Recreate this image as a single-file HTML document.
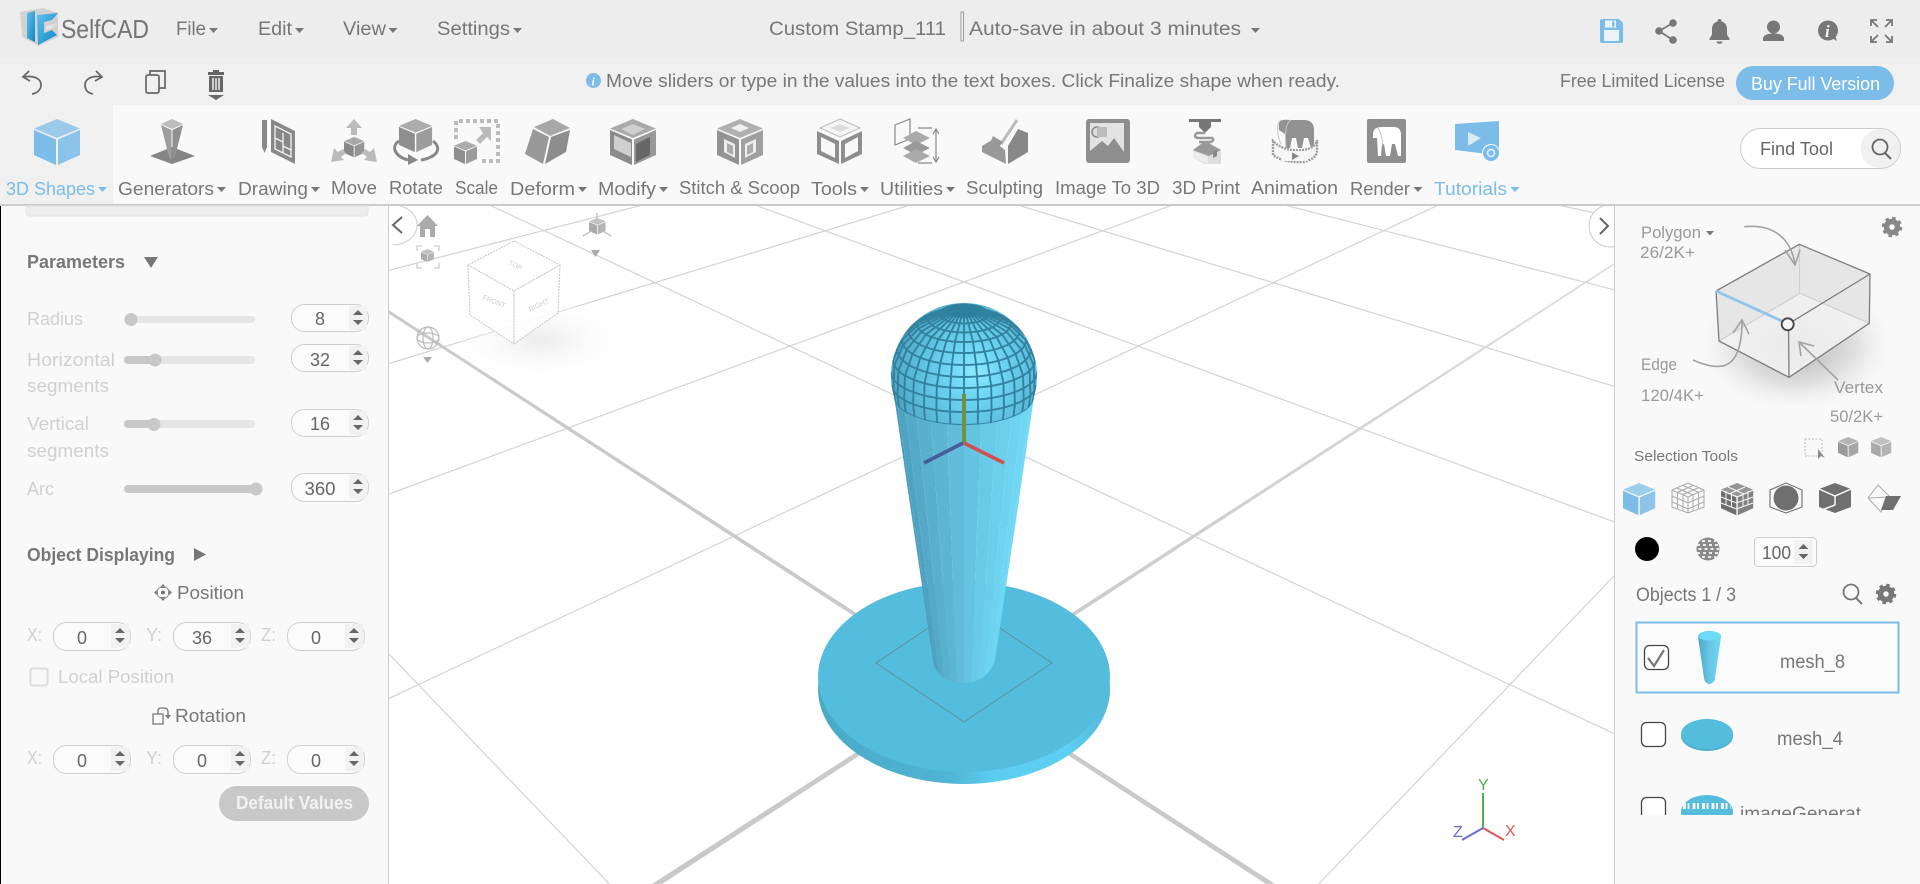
<!DOCTYPE html>
<html lang="en"><head><meta charset="utf-8"><title>SelfCAD</title>
<style>
html,body{margin:0;padding:0;width:1920px;height:884px;overflow:hidden;background:#fff}
.b{position:absolute}
svg{position:absolute;left:0;top:0;overflow:hidden}
text{font-family:"Liberation Sans",sans-serif;font-size:18px;fill:#777}
.l{fill:#d0d0d0}.m{fill:#999}.c{fill:#7cbce8}.w{fill:#fff}.n{fill:#666}
.h{font-weight:bold;fill:#777}
.s{font-size:19px}
</style></head><body>
<div class="b" style="left:0;top:0;width:1920px;height:58px;background:#ededed"></div>
<div class="b" style="left:0;top:58px;width:1920px;height:47px;background:#f0f0f0"></div>
<div class="b" style="left:0;top:105px;width:1920px;height:99px;background:#f9f9f9"></div>
<div class="b" style="left:0;top:105px;width:113px;height:99px;background:#f0f0f0"></div>
<div class="b" style="left:0;top:204px;width:1920px;height:2px;background:#cbcbcb"></div>
<div class="b" style="left:0;top:206px;width:389px;height:678px;background:#f9f9f9;border-right:1px solid #ccc;box-shadow:inset 1px 0 0 #000;box-sizing:border-box"></div>
<div class="b" style="left:1614px;top:206px;width:306px;height:678px;background:#f9f9f9;border-left:1px solid #ccc;box-sizing:border-box"></div>
<svg width="1920" height="884" viewBox="0 0 1920 884" xmlns="http://www.w3.org/2000/svg">
<defs>
<g id="cube"><path fill="currentColor" fill-opacity=".72" d="M23 0 46 9.5 23 19 0 9.5z"/><path fill="currentColor" d="M0 11 22 20.5V46L0 36z"/><path fill="currentColor" fill-opacity=".88" d="M24 20.5 46 11V36L24 46z"/></g>
<g id="spin"><rect x="-9" y="-12" width="18" height="24" fill="#f1f1f1"/><path fill="#666" d="M-5-3 0-8 5-3zM-5 2H5L0 7z"/></g>
<clipPath id="vp"><rect x="389" y="206" width="1225" height="678"/></clipPath>
<clipPath id="dome"><path d="M894.1 397A73 73 0 1 1 1033.9 397A69.9 28 0 0 1 894.1 397z"/></clipPath>
<clipPath id="conec"><path d="M893.800 395 912 520 931 660C938 678 950 683 963 683 976 683 989 678 995 660L1016 520 1034.200 395z"/></clipPath>
<clipPath id="list"><rect x="1620" y="610" width="290" height="205"/></clipPath>
<linearGradient id="thumb" gradientUnits="userSpaceOnUse" x1="1698" x2="1721" y1="0" y2="0"><stop offset="0" stop-color="#4fa8c8"/><stop offset=".5" stop-color="#66c6e4"/><stop offset="1" stop-color="#70d8f6"/></linearGradient>
<linearGradient id="dside" gradientUnits="userSpaceOnUse" x1="818" x2="1110" y1="0" y2="0"><stop offset="0" stop-color="#4aa9c8"/><stop offset=".45" stop-color="#50b4d4"/><stop offset=".6" stop-color="#5bcdf0"/><stop offset=".85" stop-color="#5ccff2"/><stop offset="1" stop-color="#55b8d8"/></linearGradient>
<linearGradient id="thick" gradientUnits="userSpaceOnUse" x1="660" y1="884" x2="1614" y2="264"><stop offset="0" stop-color="#c8c8c8"/><stop offset=".5" stop-color="#cdcdcd"/><stop offset="1" stop-color="#dedede"/></linearGradient>
<radialGradient id="sph" gradientUnits="userSpaceOnUse" cx="975" cy="372" r="84"><stop offset="0" stop-color="#8eeaff"/><stop offset=".3" stop-color="#6fd6f6"/><stop offset=".7" stop-color="#5cbcdc"/><stop offset="1" stop-color="#4fa5c4"/></radialGradient>
<radialGradient id="shd"><stop offset="0" stop-color="#aaa"/><stop offset=".55" stop-color="#ccc" stop-opacity=".6"/><stop offset="1" stop-color="#f9f9f9" stop-opacity="0"/></radialGradient>
<radialGradient id="shd2"><stop offset="0" stop-color="#ececec"/><stop offset="1" stop-color="#fff" stop-opacity="0"/></radialGradient>
<linearGradient id="lg" x1="0" x2="1" y1="0" y2="1"><stop offset="0" stop-color="#5fc0ee"/><stop offset="1" stop-color="#0e86c4"/></linearGradient>
</defs>

<!-- viewport grid -->
<g clip-path="url(#vp)">
<g stroke="#d3d3d3" stroke-width="1.2" fill="none">
<path d="M389 654 609.500 884M479 200 1614 733.600M741.700 200 1614 521.800M1001.400 200 1614 386.300M1265 200 1614 289.700M1535 200 1614 217"/>
<path d="M1318.700 884 1614 576M389 698.400 1449 200M389 494 1186 200M389 363.500 926.500 200M389 270.300 662 200"/>
</g>
<polygon fill="#c9c9c9" points="389,310.300 1275,884 1266,884 389,313.700"/>
<polygon fill="url(#thick)" points="652,884 662,884 1614,265 1614,263"/>

<!-- nav cube -->
<ellipse cx="540" cy="340" rx="95" ry="45" fill="url(#shd2)"/>
<path d="M514 241 560 265 514 291 468 265z" fill="#fff" fill-opacity=".75" stroke="#c6c6c6" stroke-dasharray="2 1"/>
<path d="M468 265 470 315 514 344 514 291z" fill="#fff" fill-opacity=".75" stroke="#c6c6c6" stroke-dasharray="2 1"/>
<path d="M560 265 558 313 514 344 514 291z" fill="#fff" fill-opacity=".75" stroke="#c6c6c6" stroke-dasharray="2 1"/>
<text x="0" y="0" transform="translate(508,264) rotate(28)" style="font-size:7px;fill:#ccc">TOP</text>
<text x="0" y="0" transform="translate(482,299) rotate(22)" style="font-size:7px;fill:#ccc">FRONT</text>
<text x="0" y="0" transform="translate(530,312) rotate(-26)" style="font-size:7px;fill:#ccc">RIGHT</text>

<!-- disc -->
<ellipse cx="964" cy="689" rx="146" ry="95" fill="url(#dside)"/>
<ellipse cx="964" cy="677" rx="146" ry="95" fill="#54bcdc"/>
<path d="M964 604 1052 663 964 722 876 663z" fill="none" stroke="#5f8c9c" stroke-width=".9"/>
<!-- cone facets -->
<g clip-path="url(#conec)">
<polygon fill="#4c9dbc" points="893.800,395 896.200,395 938.300,690 937.400,690"/>
<polygon fill="#4fa2c1" points="896.200,395 903.200,395 941,690 938.300,690"/>
<polygon fill="#54a9c8" points="903.200,395 914.400,395 945.200,690 941,690"/>
<polygon fill="#58afce" points="914.400,395 928.900,395 950.700,690 945.200,690"/>
<polygon fill="#5bb5d3" points="928.900,395 945.800,395 957.100,690 950.700,690"/>
<polygon fill="#60bcda" points="945.800,395 964,395 964,690 957.100,690"/>
<polygon fill="#64c3e0" points="964,395 982.200,395 970.900,690 964,690"/>
<polygon fill="#68cae6" points="982.200,395 999.100,395 977.300,690 970.900,690"/>
<polygon fill="#6bcfec" points="999.100,395 1013.600,395 982.800,690 977.300,690"/>
<polygon fill="#6dd3f0" points="1013.600,395 1024.800,395 987,690 982.800,690"/>
<polygon fill="#6fd6f4" points="1024.800,395 1031.800,395 989.700,690 987,690"/>
<polygon fill="#70d8f6" points="1031.800,395 1040,395 1000,690 989.700,690"/>
</g>
<!-- dome -->
<path d="M894.100 397A73 73 0 1 1 1033.900 397A69.900 28 0 0 1 894.100 397z" fill="url(#sph)"/>
<g clip-path="url(#dome)" fill="none" stroke="#32829f" stroke-width="1.900" stroke-linejoin="round">
<ellipse cx="964" cy="311.300" rx="14.200" ry="6"/>
<ellipse cx="964" cy="314" rx="24" ry="9.500"/>
<path d="M928 319A36 13.500 0 0 0 1000 319"/>
<path d="M918 325A46 17 0 0 0 1010 325"/>
<path d="M909 332A55 21 0 0 0 1019 332"/>
<path d="M902 340A62 25 0 0 0 1026 340"/>
<path d="M897 349A67 28 0 0 0 1031 349"/>
<path d="M893 360A71 28 0 0 0 1035 360"/>
<path d="M891 372A73 28 0 0 0 1037 372"/>
<path d="M892 385A72 27 0 0 0 1036 385"/>
<path d="M894 397A70 28 0 0 0 1034 397"/>
<path d="M964 317.300V425"/>
<polyline points="966.800,317.200 973,341.700 976.100,364.500 977.800,387.500 978,411.500 977.700,424.500"/><polyline points="961.200,317.200 955,341.700 951.900,364.500 950.200,387.500 950,411.500 950.300,424.500"/>
<polyline points="969.400,316.800 981.600,340.700 987.700,363.100 991.200,385.900 991.600,409.900 990.800,422.900"/><polyline points="958.600,316.800 946.400,340.700 940.300,363.100 936.800,385.900 936.400,409.900 937.200,422.900"/>
<polyline points="971.900,316.300 989.600,339.100 998.500,360.800 1003.500,383.300 1004,407.400 1002.900,420.300"/><polyline points="956.100,316.300 938.400,339.100 929.500,360.800 924.500,383.300 924,407.400 925.100,420.300"/>
<polyline points="974,315.500 996.500,337 1007.800,357.700 1014.200,379.800 1014.900,404.100 1013.500,416.800"/><polyline points="954,315.500 931.500,337 920.200,357.700 913.800,379.800 913.100,404.100 914.500,416.800"/>
<polyline points="975.800,314.600 1002.200,334.500 1015.500,353.900 1023,375.600 1023.800,400 1022.200,412.600"/><polyline points="952.200,314.600 925.800,334.500 912.500,353.900 905,375.600 904.200,400 905.800,412.600"/>
<polyline points="977.100,313.600 1006.500,331.500 1021.300,349.600 1029.600,370.700 1030.500,395.300 1028.700,407.700"/><polyline points="950.900,313.600 921.500,331.500 906.700,349.600 898.400,370.700 897.500,395.300 899.300,407.700"/>
<polyline points="977.900,312.500 1009.100,328.300 1024.800,344.900 1033.700,365.500 1034.600,390.300 1032.700,402.500"/><polyline points="950.100,312.500 918.900,328.300 903.200,344.900 894.300,365.500 893.400,390.300 895.300,402.500"/>
<polyline points="978.200,311.300 1010,325 1026,340 1035,360"/><polyline points="949.800,311.300 918,325 902,340 893,360"/>
<polyline points="977.900,310.100 1009.100,321.700 1024.800,335"/><polyline points="950.100,310.100 918.900,321.700 903.200,335"/>
<polyline points="977.100,309 1006.500,318.500 1021.300,330.400"/><polyline points="950.900,309 921.500,318.500 906.700,330.400"/>
<polyline points="975.800,308 1002.200,315.500 1015.500,326.100"/><polyline points="952.200,308 925.800,315.500 912.500,326.100"/>
<polyline points="974,307 996.500,313 1007.800,322.300"/><polyline points="954,307 931.500,313 920.200,322.300"/>
<polyline points="971.900,306.300 989.600,310.900"/><polyline points="956.100,306.300 938.400,310.900"/>
</g>
<ellipse cx="963" cy="311" rx="15.500" ry="6.500" fill="#2d7f9f"/>
<!-- gizmo -->
<path d="M964 394V443" stroke="#74913f" stroke-width="4"/>
<path d="M963 443 924 463" stroke="#4a5b99" stroke-width="3.600"/>
<path d="M964 443 1004 463" stroke="#d0504f" stroke-width="3.600"/>
<!-- viewport icons -->
<path fill="#aaa" d="M427.500 215 438 226H435V237H430V229H425V237H420V226H417z"/>
<path fill="none" stroke="#ccc" stroke-width="1.300" d="M417 251V246H422M434 246H439V251M439 263V268H434M422 268H417V263"/>
<use href="#cube" transform="translate(421,249) scale(.28)" color="#aaa"/>
<use href="#cube" transform="translate(589,218) scale(.36)" color="#aaa"/>
<path stroke="#bbb" stroke-width="1.300" d="M597 213V222M583 236 591 231M611 236 603 231"/>
<path fill="#aaa" d="M591 250H600L595.500 257z"/>
<g fill="none" stroke="#bbb" stroke-width="1.200"><circle cx="428" cy="338" r="11"/><ellipse cx="428" cy="338" rx="11" ry="5"/><ellipse cx="428" cy="338" rx="5" ry="11"/></g>
<path fill="#aaa" d="M423 357H432L427.500 363z"/>
<path d="M393 205A24 20 0 0 1 393 245" fill="#fff" stroke="#ccc" stroke-width="1"/>
<path fill="none" stroke="#666" stroke-width="2" d="M402 217 393 225 402 233"/>
<circle cx="1610" cy="226" r="21" fill="#fff" stroke="#ccc"/>
<path fill="none" stroke="#666" stroke-width="2" d="M1600 218 1608 226 1600 234"/>
<!-- corner axes -->
<path stroke="#4caf50" stroke-width="2" d="M1483 828V793"/>
<path stroke="#e0555a" stroke-width="2" d="M1483 828 1504 840"/>
<path stroke="#6a6ad8" stroke-width="2" d="M1483 828 1462 840"/>
<text x="1478" y="790" style="font-size:16px;fill:#4caf50">Y</text>
<text x="1505" y="836" style="font-size:16px;fill:#e0555a">X</text>
<text x="1453" y="837" style="font-size:16px;fill:#6a6ad8">Z</text>
</g>

<!-- logo -->
<path d="M20 12 43 8 58 13V37L39 46 22 37z" fill="#d2d2d2"/>
<path d="M27 13 35 11V42L27 38z" fill="url(#lg)"/>
<path d="M37 15 58 13 52 20 44 22V33L52 30 57 35 38 45z" fill="url(#lg)"/>
<path d="M46 26 56 24 53 28 46 30z" fill="#e4e4e4"/>
<text x="61" y="38" textLength="88" lengthAdjust="spacingAndGlyphs" style="font-size:26px;fill:#757575">SelfCAD</text>

<!-- top menu -->
<g class="s">
<text class="s" x="176" y="35" textLength="30" lengthAdjust="spacingAndGlyphs">File</text>
<text class="s" x="258" y="35" textLength="34" lengthAdjust="spacingAndGlyphs">Edit</text>
<text class="s" x="343" y="35" textLength="43" lengthAdjust="spacingAndGlyphs">View</text>
<text class="s" x="437" y="35" textLength="73" lengthAdjust="spacingAndGlyphs">Settings</text>
<text class="s" x="769" y="35" textLength="177" lengthAdjust="spacingAndGlyphs">Custom Stamp_111</text>
<text class="s" x="969" y="35" textLength="272" lengthAdjust="spacingAndGlyphs">Auto-save in about 3 minutes</text>
</g>
<path fill="#777" d="M209 28h9l-4.500 5zM295 28h9l-4.500 5zM388.500 28h9l-4.500 5zM513 28h9l-4.500 5zM1251 28h9l-4.500 5z"/>
<rect x="961" y="12" width="2.500" height="29" fill="#f4f4f4" stroke="#888" stroke-width=".8"/>

<!-- top right icons -->
<path fill="#7cbce8" d="M1602 19H1619L1623 23V41Q1623 43 1621 43H1602Q1600 43 1600 41V21Q1600 19 1602 19z"/>
<rect x="1604" y="30" width="15" height="11" fill="#eaf3fa"/><rect x="1605" y="20.500" width="11" height="7" fill="#eaf3fa"/><rect x="1612" y="21.500" width="2.500" height="5" fill="#7cbce8"/>
<path fill="none" stroke="#777" stroke-width="1.800" d="M1673 23 1659 31 1673 40"/>
<g fill="#777"><circle cx="1673" cy="23" r="3.800"/><circle cx="1659" cy="31" r="3.800"/><circle cx="1673" cy="40" r="3.800"/>
<path d="M1719.500 19c-1.500 0-2 1-2 2.500-4 1-5.500 4-5.500 8v4c0 2-1.500 3.500-2.500 5v1.500h20v-1.500c-1-1.500-2.500-3-2.500-5v-4c0-4-1.500-7-5.500-8 0-1.500-.5-2.500-2-2.500zM1716.500 41.500a3 2.300 0 0 0 6 0z"/>
<circle cx="1773.500" cy="27" r="6.500"/><path d="M1763 41v-2c0-4 5-5.500 10.500-5.500s10.500 1.500 10.500 5.500v2z"/>
<circle cx="1828" cy="30.500" r="10"/><path d="M1832 38 1837 41 1835 35z"/></g>
<text x="1825" y="37" style="font:italic bold 17px 'Liberation Serif',serif;fill:#f0f0f0">i</text>
<g fill="none" stroke="#777" stroke-width="1.800"><path d="M1871 26V20H1877M1871 20 1878 27M1892 26V20H1886M1892 20 1885 27M1871 36V42H1877M1871 42 1878 35M1892 36V42H1886M1892 42 1885 35"/></g>

<!-- second bar -->
<g fill="none" stroke="#666" stroke-width="1.700"><path d="M29 71 23 77 30 81M23 77C35 75 41 79 41 85 41 90 37 93 32 94"/><path d="M96 71 102 77 95 81M102 77C90 75 85 80 85 85 85 90 88 93 93 94"/>
<rect x="146" y="75" width="13" height="18" rx="2"/><path d="M150 75V71H165V88H159"/></g>
<path fill="#666" d="M213 70H219V72H224V75H208V72H213zM209 76H223V92H209zM208 95H224L216 100z"/>
<path stroke="#f0f0f0" stroke-width="1.500" d="M213 78V90M216 78V90M219 78V90"/>
<circle cx="593.500" cy="80.500" r="7.500" fill="#7cbce8"/><text x="591.500" y="85.500" style="font:bold italic 12px 'Liberation Serif',serif;fill:#fff">i</text>
<text x="606" y="87" textLength="734" lengthAdjust="spacingAndGlyphs">Move sliders or type in the values into the text boxes. Click Finalize shape when ready.</text>
<text x="1560" y="87" textLength="165" lengthAdjust="spacingAndGlyphs">Free Limited License</text>
<rect x="1736" y="66" width="158" height="34" rx="17" fill="#7cbce8"/>
<text class="w" x="1751" y="90" textLength="129" lengthAdjust="spacingAndGlyphs">Buy Full Version</text>

<!-- toolbar icons -->
<use href="#cube" transform="translate(34,119)" color="#7cbce8"/>
<!-- generators -->
<path fill="#858585" d="M150 156 172 147 195 156 172 164z"/>
<path fill="#bbb" d="M161 124 172 119 183 124 172 129z"/><path fill="#9d9d9d" d="M161 125 171.500 130 171.500 160 169 157z"/><path fill="#909090" d="M183 125 172.500 130 172.500 160 175 157z"/>
<!-- drawing -->
<rect x="262" y="120" width="5" height="27" fill="#888"/><path fill="#888" d="M262 147H267L264.500 153z"/>
<path fill="#888" d="M271 119 295 131V164L271 152z"/><path fill="none" stroke="#f4f4f4" stroke-width="1.300" d="M275 126 291 134V157L275 149zM275 138 283 142V133M283 142 283 153M283 146 291 150"/>
<!-- move -->
<use href="#cube" transform="translate(344,137) scale(.44)" color="#888"/>
<path fill="#bbb" d="M354 119 362 128H357V135H351V128H346zM331 162 334 148 338 152 343 149 346 153 341 157 344 160zM377 162 374 148 370 152 365 149 362 153 367 157 364 160z"/>
<!-- rotate -->
<use href="#cube" transform="translate(399,119) scale(.72)" color="#8e8e8e"/>
<path fill="none" stroke="#888" stroke-width="3" d="M399 141C391 146 394 156 408 160M433 141C442 148 438 157 421 160"/><path fill="#888" d="M408 154 418 160 408 165z"/>
<!-- scale -->
<path fill="none" stroke="#bbb" stroke-width="4" stroke-dasharray="4 3" d="M456 139V121H498V161H480"/>
<use href="#cube" transform="translate(454,141) scale(.5)" color="#8e8e8e"/>
<path fill="#bbb" d="M491 127V141L487 137 480 144 476 140 483 133 479 127z"/>
<!-- deform -->
<path fill="#a8a8a8" d="M534 127 553 119 570 128 550 136z"/><path fill="#999" d="M533 129 549 137 543 164 525 154z"/><path fill="#8d8d8d" d="M551 137 570 130 566 152 545 164z"/>
<!-- modify -->
<use href="#cube" transform="translate(610,119)" color="#8a8a8a"/>
<path fill="#cfcfcf" d="M621 129 633 124 645 129 633 135zM614 135 631 143V157L614 149z"/><path fill="#666" d="M636 144 650 137V155L636 162z"/>
<!-- stitch -->
<use href="#cube" transform="translate(717,119)" color="#939393"/>
<path fill="#f0f0f0" d="M731 128 740 124 749 128 740 132z"/><path fill="#eee" d="M724 139 735 144V158L724 152zM745 144 756 139V152L745 158z"/><path fill="#aaa" d="M727 143 733 146V155L727 152zM747 146 753 143V152L747 155z"/>
<!-- tools -->
<path fill="#8e8e8e" d="M817 131 839 141V164L817 154zM841 141 862 131V154L841 164z"/>
<path fill="#f8f8f8" d="M821 137 835 144V158L821 151zM845 144 858 137V151L845 158z"/>
<path fill="#f4f4f4" stroke="#bbb" d="M840 119 860 128 840 137 820 128z"/><path fill="#ddd" d="M830 128 840 124 850 128 840 132z"/>
<!-- utilities -->
<path fill="none" stroke="#888" stroke-width="1.200" d="M895 125 910 119V139L895 145zM918 128H932M918 163H932M936 130V161M933 134 936 129 939 134M933 157 936 162 939 157"/>
<path fill="#aaa" d="M916 131 930 138 916 145 903 138z"/><path fill="#999" d="M916 141 930 148 916 155 903 148z"/><path fill="#aaa" d="M916 149 930 156 916 163 903 156z"/>
<!-- sculpting -->
<path fill="#999" d="M982 146 992 140 1005 150 1006 164 982 152z"/><path fill="#888" d="M1008 164V146L1018 129 1028 133V152z"/><path stroke="#bbb" stroke-width="3" d="M1001 144 1017 120"/><path fill="#999" d="M993 136 1003 142 998 148 990 143z"/>
<!-- image -->
<rect x="1086" y="119" width="44" height="44" rx="3" fill="#8e8e8e"/>
<rect x="1090" y="123" width="34" height="36" fill="#e3e3e3"/>
<path fill="#8e8e8e" d="M1090 159V151L1102 141 1108 146 1114 138 1124 152V159z"/>
<circle cx="1097" cy="132" r="5" fill="#ddd" stroke="#888" stroke-width="1.500"/><rect x="1097" y="127" width="10" height="10" fill="#bbb"/>
<!-- print -->
<rect x="1189" y="119" width="32" height="3" fill="#777"/><path fill="#777" d="M1199 122H1211V127L1205 133 1199 127z"/><path fill="none" stroke="#999" stroke-width="2.500" d="M1205 133H1197Q1193 136 1197 138H1212Q1215 140 1211 142H1199"/>
<path fill="#ddd" d="M1205 141 1221 150V164L1205 164 1193 158V150z"/><path fill="#999" d="M1193 150 1205 141 1221 150 1209 156z"/><path fill="#ececec" d="M1193 151 1208 157V164L1193 158z"/><path fill="#888" d="M1213 152 1217 150V156L1213 158z"/>
<!-- animation -->
<path fill="#929292" d="M1279 122Q1281 119 1290 120H1304Q1314 120 1314 130V148H1311L1308 138 1304 138 1302 148 1298 148 1296 138 1292 138 1290 148 1286 148 1285 134 1279 130z"/>
<path fill="none" stroke="#c4c4c4" d="M1281 120C1276 124 1277 136 1281 144M1291 120C1285 123 1285 135 1286 148"/>
<path fill="#f4f4f4" stroke="#9c9c9c" stroke-width="2.400" stroke-dasharray="2 1" d="M1273 141V155Q1284 163 1303 162 1316 159 1317 152V140Q1316 148 1303 150 1284 152 1273 141z"/>
<path fill="#f6f6f6" d="M1282 151H1308V161H1282z"/><path fill="#888" d="M1292 152.500 1299 156 1292 160z"/>
<!-- render -->
<rect x="1367" y="119" width="39" height="44" rx="2" fill="#8e8e8e"/>
<path fill="#fff" d="M1373 134Q1373 127 1382 127H1394Q1401 127 1401 135V156L1398 156 1395 144 1392 144 1390 156 1386 156 1384 144 1382 144 1381 156 1378 156 1377 138 1373 138z"/>
<path fill="none" stroke="#c4c4c4" d="M1377 128C1381 130 1382 138 1383 146"/>
<!-- tutorials -->
<path fill="#7cbce8" d="M1455 124 1499 121V153L1496 155 1455 150z"/><path fill="#d9ebf8" d="M1468 132V146L1481 138z"/>
<circle cx="1491" cy="153" r="8.500" fill="#7cbce8" stroke="#f9f9f9" stroke-width="1"/><circle cx="1491" cy="153" r="3.500" fill="none" stroke="#e6f2fb" stroke-width="1.500"/>

<!-- toolbar labels -->
<text class="c" x="6" y="195" textLength="89" lengthAdjust="spacingAndGlyphs">3D Shapes</text>
<text x="118" y="195" textLength="96" lengthAdjust="spacingAndGlyphs">Generators</text>
<text x="238" y="195" textLength="70" lengthAdjust="spacingAndGlyphs">Drawing</text>
<text x="331" y="194" textLength="46" lengthAdjust="spacingAndGlyphs">Move</text>
<text x="389" y="194" textLength="54" lengthAdjust="spacingAndGlyphs">Rotate</text>
<text x="455" y="194" textLength="43" lengthAdjust="spacingAndGlyphs">Scale</text>
<text x="510" y="195" textLength="65" lengthAdjust="spacingAndGlyphs">Deform</text>
<text x="598" y="195" textLength="58" lengthAdjust="spacingAndGlyphs">Modify</text>
<text x="679" y="194" textLength="121" lengthAdjust="spacingAndGlyphs">Stitch &amp; Scoop</text>
<text x="811" y="195" textLength="46" lengthAdjust="spacingAndGlyphs">Tools</text>
<text x="880" y="195" textLength="63" lengthAdjust="spacingAndGlyphs">Utilities</text>
<text x="966" y="194" textLength="77" lengthAdjust="spacingAndGlyphs">Sculpting</text>
<text x="1055" y="194" textLength="105" lengthAdjust="spacingAndGlyphs">Image To 3D</text>
<text x="1172" y="194" textLength="68" lengthAdjust="spacingAndGlyphs">3D Print</text>
<text x="1251" y="194" textLength="87" lengthAdjust="spacingAndGlyphs">Animation</text>
<text x="1350" y="195" textLength="60" lengthAdjust="spacingAndGlyphs">Render</text>
<text class="c" x="1434" y="195" textLength="73" lengthAdjust="spacingAndGlyphs">Tutorials</text>
<path fill="#7cbce8" d="M98 187h9l-4.500 5zM1510.500 187h9l-4.500 5z"/>
<path fill="#777" d="M217 187h9l-4.500 5zM311 187h9l-4.500 5zM578 187h9l-4.500 5zM659 187h9l-4.500 5zM860 187h9l-4.500 5zM946 187h9l-4.500 5zM1413.500 187h9l-4.500 5z"/>
<!-- find tool -->
<rect x="1740.500" y="128.500" width="160" height="40" rx="20" fill="#fff" stroke="#ccc"/>
<path d="M1880 129H1880.500A19.500 19.500 0 0 1 1880.500 168H1880A19 19 0 0 1 1880 129z" fill="#f0f0f0"/>
<text x="1760" y="155" textLength="73" lengthAdjust="spacingAndGlyphs" class="n">Find Tool</text>
<circle cx="1880" cy="147" r="7.500" fill="none" stroke="#666" stroke-width="1.800"/><path stroke="#666" stroke-width="2" d="M1885 153 1891 159"/>

<!-- left panel -->
<path d="M26 206V212Q26 216 30 216H364Q368 216 368 212V206z" fill="#ececec" stroke="#e3e3e3"/>
<text class="h" x="27" y="268" textLength="98" lengthAdjust="spacingAndGlyphs">Parameters</text>
<path fill="#777" d="M144 257H158L151 268z"/>
<g>
<text class="l" x="27" y="325" textLength="56" lengthAdjust="spacingAndGlyphs">Radius</text>
<text class="l" x="27" y="366" textLength="88" lengthAdjust="spacingAndGlyphs">Horizontal</text>
<text class="l" x="27" y="392" textLength="82" lengthAdjust="spacingAndGlyphs">segments</text>
<text class="l" x="27" y="430" textLength="62" lengthAdjust="spacingAndGlyphs">Vertical</text>
<text class="l" x="27" y="457" textLength="82" lengthAdjust="spacingAndGlyphs">segments</text>
<text class="l" x="27" y="495" textLength="27" lengthAdjust="spacingAndGlyphs">Arc</text>
</g>
<g fill="#e5e5e5"><rect x="124" y="316" width="131" height="7" rx="3.500"/><rect x="124" y="356" width="131" height="8" rx="4"/><rect x="124" y="420" width="131" height="8" rx="4"/></g>
<g fill="#c8c8c8"><rect x="124" y="356" width="31" height="8" rx="4"/><rect x="124" y="420" width="30" height="8" rx="4"/><rect x="124" y="485" width="132" height="8" rx="4"/>
<circle cx="131" cy="319.500" r="6.500"/><circle cx="155" cy="360" r="6.500"/><circle cx="154" cy="424.500" r="6.500"/><circle cx="256" cy="489" r="6.500"/></g>
<g fill="#fbfbfb" stroke="#cfcfcf"><rect x="291.500" y="304.500" width="77" height="27" rx="13"/><rect x="291.500" y="344.500" width="77" height="27" rx="13"/><rect x="291.500" y="409.500" width="77" height="27" rx="13"/><rect x="291.500" y="473.500" width="77" height="28" rx="13"/>
<rect x="53.500" y="622.500" width="77" height="28" rx="13"/><rect x="173.500" y="622.500" width="77" height="28" rx="13"/><rect x="287.500" y="622.500" width="77" height="28" rx="13"/>
<rect x="53.500" y="745.500" width="77" height="28" rx="13"/><rect x="173.500" y="745.500" width="77" height="28" rx="13"/><rect x="287.500" y="745.500" width="77" height="28" rx="13"/></g>
<use href="#spin" x="358" y="318"/><use href="#spin" x="358" y="358"/><use href="#spin" x="358" y="423"/><use href="#spin" x="358" y="487"/>
<use href="#spin" x="120" y="636"/><use href="#spin" x="240" y="636"/><use href="#spin" x="354" y="636"/>
<use href="#spin" x="120" y="759"/><use href="#spin" x="240" y="759"/><use href="#spin" x="354" y="759"/>
<g text-anchor="middle" class="n">
<text class="n" x="320" y="325">8</text><text class="n" x="320" y="366">32</text><text class="n" x="320" y="430">16</text><text class="n" x="320" y="495" textLength="31" lengthAdjust="spacingAndGlyphs">360</text>
<text class="n" x="82" y="644">0</text><text class="n" x="202" y="644">36</text><text class="n" x="316" y="644">0</text>
<text class="n" x="82" y="767">0</text><text class="n" x="202" y="767">0</text><text class="n" x="316" y="767">0</text>
</g>
<text class="h" x="27" y="561" textLength="148" lengthAdjust="spacingAndGlyphs">Object Displaying</text>
<path fill="#777" d="M194 548 206 554.500 194 561z"/>
<path fill="#777" d="M163 584 166.500 588H159.500zM163 601 166.500 597H159.500zM154 592.500 158 589V596zM172 592.500 168 589V596z"/><circle cx="163" cy="592.500" r="2" fill="#777"/><circle cx="163" cy="592.500" r="6" fill="none" stroke="#999"/>
<text x="177" y="599" textLength="67" lengthAdjust="spacingAndGlyphs" fill="#888">Position</text>
<text class="l" x="27" y="641" textLength="15" lengthAdjust="spacingAndGlyphs">X:</text><text class="l" x="146" y="641" textLength="16" lengthAdjust="spacingAndGlyphs">Y:</text><text class="l" x="261" y="641" textLength="15" lengthAdjust="spacingAndGlyphs">Z:</text>
<rect x="30.500" y="668.500" width="17" height="17" rx="2" fill="none" stroke="#ddd" stroke-width="2"/>
<text class="l" x="58" y="683" textLength="116" lengthAdjust="spacingAndGlyphs">Local Position</text>
<path fill="none" stroke="#777" stroke-width="1.300" d="M153 714H163V724H153zM158 714V711Q158 708 161 708H164Q168 708 168 712V716"/><path fill="#777" d="M165 715H171L168 719z"/>
<text x="175" y="722" textLength="71" lengthAdjust="spacingAndGlyphs">Rotation</text>
<text class="l" x="27" y="764" textLength="15" lengthAdjust="spacingAndGlyphs">X:</text><text class="l" x="146" y="764" textLength="16" lengthAdjust="spacingAndGlyphs">Y:</text><text class="l" x="261" y="764" textLength="15" lengthAdjust="spacingAndGlyphs">Z:</text>
<rect x="219" y="786" width="150" height="35" rx="17.500" fill="#c8c8c8"/>
<text x="236" y="809" textLength="117" lengthAdjust="spacingAndGlyphs" style="fill:#f2f2f2;font-weight:bold">Default Values</text>

<!-- right panel: selection diagram -->
<ellipse cx="1796" cy="345" rx="105" ry="70" fill="url(#shd)"/>
<path d="M1716 291 1799.300 244.300 1870 274 1869.300 323.300 1789 377.300 1719 341z" fill="#f1f1f1" fill-opacity=".9"/>
<path d="M1716 291 1799.300 244.300 1800 293.300 1719 341zM1799.300 244.300 1870 274 1869.300 323.300 1800 293.300z" fill="#e6e6e6"/>
<path d="M1800 293.300 1869.300 323.300M1800 293.300 1719 341M1799.500 244.300V293" stroke="#cfcfcf" stroke-width="1.200" fill="none"/>
<path d="M1716 291 1799.300 244.300 1870 274 1787.700 324.300M1870 274 1869.300 323.300 1789 377.300 1719 341 1716 291M1788.500 324.300 1789 377.300" fill="none" stroke="#7d7d7d" stroke-width="1.300" stroke-linejoin="round"/>
<path d="M1716 291 1784 322" stroke="#8cc6ea" stroke-width="2.800"/>
<circle cx="1787.700" cy="324.300" r="6" fill="#f4f4f4" stroke="#444" stroke-width="1.800"/>
<g fill="none" stroke="#a2a2a2" stroke-width="1.600"><path d="M1744.300 226.700C1770 224 1790 235 1795 264M1785 250 1795 265 1800 250"/><path d="M1693 360C1720 372 1742 372 1742 321M1733 333 1742 320 1749 334"/><path d="M1838 380 1799 342M1801 356 1799 342 1814 346"/></g>
<text class="m" x="1641" y="238" textLength="60" lengthAdjust="spacingAndGlyphs" style="font-size:17px">Polygon</text>
<path fill="#777" d="M1706 231h8l-4 4.500z"/>
<text class="m" x="1640" y="258" textLength="55" lengthAdjust="spacingAndGlyphs" style="font-size:17px">26/2K+</text>
<text class="m" x="1641" y="370" textLength="36" lengthAdjust="spacingAndGlyphs" style="font-size:17px">Edge</text>
<text class="m" x="1641" y="401" textLength="63" lengthAdjust="spacingAndGlyphs" style="font-size:17px">120/4K+</text>
<text class="m" x="1834" y="393" textLength="49" lengthAdjust="spacingAndGlyphs" style="font-size:17px">Vertex</text>
<text class="m" x="1830" y="422" textLength="53" lengthAdjust="spacingAndGlyphs" style="font-size:17px">50/2K+</text>
<circle cx="1892" cy="227" r="5.500" fill="none" stroke="#888" stroke-width="5.500"/><circle cx="1892" cy="227" r="9" fill="none" stroke="#888" stroke-width="2.500" stroke-dasharray="3.500 3.560"/>
<text x="1634" y="461" textLength="104" lengthAdjust="spacingAndGlyphs" style="font-size:15px">Selection Tools</text>
<rect x="1805" y="439" width="17" height="17" fill="none" stroke="#bbb" stroke-dasharray="2 1.500"/><path fill="#888" d="M1818 449V459L1821 456 1825 458z"/>
<use href="#cube" transform="translate(1838,437) scale(.44)" color="#999"/><use href="#cube" transform="translate(1871,437) scale(.44)" color="#aaa"/>
<!-- selection modes -->
<use href="#cube" transform="translate(1623,483) scale(.7)" color="#7cbce8"/>
<g fill="none" stroke="#aaa" stroke-width="1"><path d="M1688 483 1704 490V507L1688 513 1672 507V490zM1672 490 1688 497 1704 490M1688 497V513M1677 488 1693 495M1683 485.500 1699 492.500M1699 487.500 1683 494.500M1693 485.500 1677 492.500M1677.500 492.500V509M1683 495V511M1693 495V511M1698.500 492.500V509M1672 496 1688 503 1704 496M1672 502 1688 509 1704 502"/></g>
<use href="#cube" transform="translate(1721,483) scale(.7)" color="#6f6f6f"/>
<path fill="none" stroke="#f9f9f9" stroke-width="1" d="M1726 491V505M1731.500 493V507M1743 493V507M1748 491V505M1721 497 1736.500 503 1753 497M1721 503 1736.500 509 1753 503M1728 487 1744 494M1745 487 1729 494"/>
<path fill="none" stroke="#777" stroke-width="1.200" d="M1786 483 1802 490V507L1786 513 1770 507V490z"/><circle cx="1786" cy="498" r="12.500" fill="#6f6f6f"/>
<path fill="#6f6f6f" d="M1835 483 1851 489V507L1835 513 1819 507V489z"/><path fill="none" stroke="#f9f9f9" stroke-width="1.500" d="M1819 489 1835 496 1851 489M1835 496V505M1835 505 1819 511"/>
<path fill="none" stroke="#aaa" d="M1868 498 1878 485 1890 497 1881 512zM1868 498 1890 497"/>
<path fill="#6f6f6f" d="M1886 496H1901L1893 510H1881z"/>
<!-- display row -->
<circle cx="1647" cy="549" r="12" fill="#000"/>
<circle cx="1708" cy="549" r="11.500" fill="#8a8a8a"/>
<path fill="none" stroke="#ececec" stroke-width="2" stroke-dasharray="3 3" d="M1697 545H1719M1698.500 549H1719M1697 553H1718M1702 541H1716M1702 557H1716"/>
<rect x="1754.500" y="537.500" width="62" height="29" rx="4" fill="#fbfbfb" stroke="#ccc"/>
<text class="n" x="1762" y="559" textLength="29" lengthAdjust="spacingAndGlyphs">100</text>
<use href="#spin" x="1803.500" y="552"/>
<text x="1636" y="601" textLength="100" lengthAdjust="spacingAndGlyphs" style="font-size:19px">Objects 1 / 3</text>
<circle cx="1851" cy="592" r="7.500" fill="none" stroke="#777" stroke-width="1.800"/><path stroke="#777" stroke-width="2" d="M1856 598 1862 604"/>
<circle cx="1886" cy="594" r="5.500" fill="none" stroke="#777" stroke-width="5.500"/><circle cx="1886" cy="594" r="9" fill="none" stroke="#777" stroke-width="2.500" stroke-dasharray="3.500 3.560"/>
<rect x="1636.500" y="622.500" width="262" height="70" fill="#fafafa" stroke="#7cbce8" stroke-width="2"/>
<rect x="1644.500" y="645.500" width="24" height="24" rx="5" fill="#fff" stroke="#444" stroke-width="1.300"/>
<path fill="none" stroke="#777" stroke-width="2.200" d="M1648 658 1654 666 1664 650"/>
<path fill="url(#thumb)" d="M1698 637C1698 629 1721 629 1721 637L1715 678C1714 686 1705 686 1704 678z"/>
<ellipse cx="1709.500" cy="636" rx="11.500" ry="4.500" fill="#6fd9f8"/>
<text x="1780" y="668" textLength="65" lengthAdjust="spacingAndGlyphs" style="font-size:19px">mesh_8</text>
<rect x="1641.500" y="722.500" width="24" height="24" rx="5" fill="#fff" stroke="#444" stroke-width="1.300"/>
<ellipse cx="1707" cy="736" rx="26" ry="15" fill="#4eb0ce"/><ellipse cx="1707" cy="734" rx="26" ry="15" fill="#54bcdc"/>
<text x="1777" y="745" textLength="66" lengthAdjust="spacingAndGlyphs" style="font-size:19px">mesh_4</text>
<g clip-path="url(#list)">
<rect x="1641.500" y="797.500" width="24" height="24" rx="5" fill="#fff" stroke="#444" stroke-width="1.300"/>
<ellipse cx="1707" cy="812" rx="26" ry="17" fill="#54bcdc"/>
<path fill="none" stroke="#f2f2f2" stroke-width="6" stroke-dasharray="3 1.500 2 3" d="M1683 806H1731"/>
<text x="1740" y="820" textLength="121" lengthAdjust="spacingAndGlyphs" style="font-size:19px">imageGenerat</text>
</g>
</svg>
</body></html>
